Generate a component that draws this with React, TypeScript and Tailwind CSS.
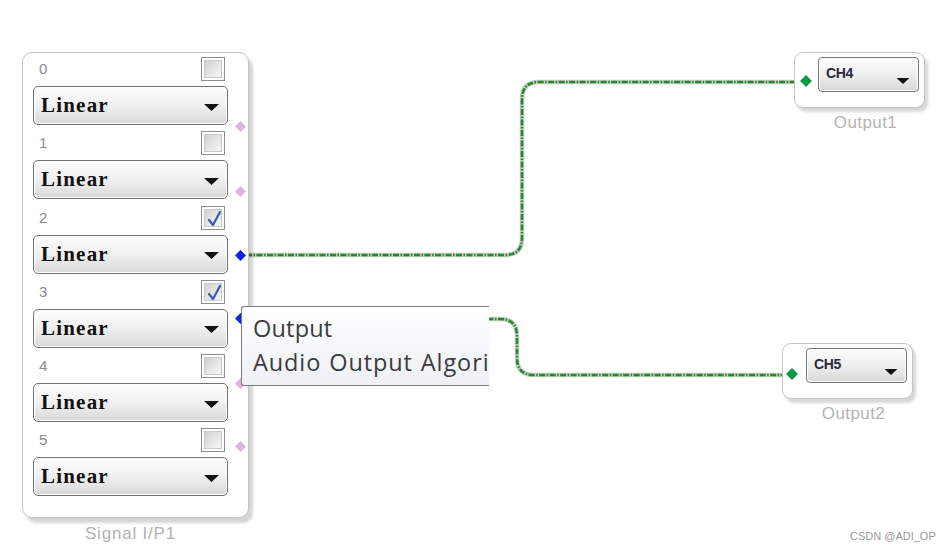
import React from "react";

const rows = [
  { n: "0", checked: false },
  { n: "1", checked: false },
  { n: "2", checked: true },
  { n: "3", checked: true },
  { n: "4", checked: false },
  { n: "5", checked: false },
];

const pins = [
  { y: 126, c: "#d8b8da" },
  { y: 191, c: "#d8b8da" },
  { y: 255, c: "#0a24e8" },
  { y: 318, c: "#0a24e8" },
  { y: 383, c: "#d8b8da" },
  { y: 446, c: "#d8b8da" },
];

function Diamond({ x, y, color, size = 12 }: { x: number; y: number; color: string; size?: number }) {
  return (
    <svg
      className="absolute"
      style={{ left: x - size / 2, top: y - size / 2 }}
      width={size}
      height={size}
      viewBox="0 0 12 12"
    >
      <polygon points="6,0 12,6 6,12 0,6" fill={color} />
    </svg>
  );
}

function Arrow({ w = 15, h = 7 }: { w?: number; h?: number }) {
  return (
    <svg width={w} height={h} viewBox="0 0 15 7" className="shrink-0">
      <polygon points="0,0 15,0 7.5,7" fill="#111" />
    </svg>
  );
}

function Checkbox({ checked }: { checked: boolean }) {
  return (
    <div className="w-[24px] h-[24px] border border-[#8e8e8e] bg-white p-[2px]">
      <div className="w-full h-full border border-[#c9c9c9] bg-linear-to-br from-[#d2d2d2] to-[#f6f6f6] relative">
        {checked && (
          <svg className="absolute left-0 top-0" width="18" height="18" viewBox="0 0 18 18">
            <path d="M4 10 L8 15 L15 2" fill="none" stroke="#3d57b5" strokeWidth="2.2" strokeLinecap="round" strokeLinejoin="round" />
          </svg>
        )}
      </div>
    </div>
  );
}

function LinearSelect() {
  return (
    <div className="h-[39px] w-[195px] rounded-[5px] border-[1.5px] border-[#727272] bg-linear-to-b from-[#fdfdfd] via-[#f0f0f0] to-[#d9d9d9] flex items-center justify-between pl-[7px] pr-[8px] shadow-[inset_0_0_0_1px_#ffffff]">
      <span className="text-[21px] leading-none tracking-[1.2px] text-[#111] font-bold font-['Liberation_Serif','DejaVu_Serif',serif]">
        Linear
      </span>
      <div className="mt-[3px]">
        <Arrow />
      </div>
    </div>
  );
}

function ChSelect({ label }: { label: string }) {
  return (
    <div className="h-[35px] w-[101px] rounded-[4px] border-[1.5px] border-[#767676] bg-linear-to-b from-[#fdfdfd] via-[#efefef] to-[#d8d8d8] flex justify-between pl-[7px] pr-[8px] pt-[8px] shadow-[inset_0_0_0_1px_#ffffff]">
      <span className="text-[14px] leading-none font-bold text-[#2a2a3a] font-['Liberation_Sans',Arial,sans-serif] tracking-[-0.3px]">
        {label}
      </span>
      <div className="mt-[12px]">
        <Arrow w={14} h={6} />
      </div>
    </div>
  );
}

function OutputBlock({ left, top, ch, name }: { left: number; top: number; ch: string; name: string }) {
  return (
    <div className="absolute flex flex-col items-center" style={{ left, top }}>
      <div className="w-[131px] h-[56px] rounded-[9px] border border-[#c6c6c6] bg-white shadow-[3px_4px_3px_rgba(0,0,0,0.16)] flex pl-[23px] pt-[4px]">
        <ChSelect label={ch} />
      </div>
      <div className="mt-[6px] pl-[12px] text-[17px] leading-none tracking-[0.4px] text-[#b4b4b4] font-['Liberation_Sans',Arial,sans-serif]">
        {name}
      </div>
    </div>
  );
}

function Wire({ d }: { d: string }) {
  return (
    <g>
      <path d={d} fill="none" stroke="#c3cfc3" strokeWidth="4.5" strokeLinejoin="round" />
      <path d={d} fill="none" stroke="#2b842f" strokeWidth="2.6" strokeDasharray="6 1.5 1.5 1.5" strokeLinejoin="round" />
    </g>
  );
}

export default function App() {
  return (
    <div className="relative w-[948px] h-[553px] bg-white overflow-hidden font-['Liberation_Sans',Arial,sans-serif]">
      {/* wires */}
      <svg className="absolute left-0 top-0" width="948" height="553">
        <Wire d="M 246 255 H 505 Q 522 255 522 238 V 99 Q 522 82 539 82 H 802" />
        <Wire d="M 246 319 H 500 Q 517 319 517 336 V 358 Q 517 375 534 375 H 788" />
      </svg>

      {/* main block */}
      <div className="absolute left-[22px] top-[52px] flex flex-col items-center">
        <div className="w-[227px] h-[466px] rounded-[10px] border border-[#c4c4c4] bg-white shadow-[4px_5px_3px_rgba(0,0,0,0.17)] pl-[10px] pt-[4px] flex flex-col gap-[6.3px]">
          {rows.map((r) => (
            <div key={r.n} className="flex flex-col w-[195px]">
              <div className="flex justify-between items-start h-[24px] pr-[3px]">
                <span className="pl-[6px] pt-[4px] text-[15px] leading-none text-[#8d8b8b]">{r.n}</span>
                <Checkbox checked={r.checked} />
              </div>
              <div className="mt-[5px]">
                <LinearSelect />
              </div>
            </div>
          ))}
        </div>
        <div className="mt-[7px] pr-[10px] text-[17px] leading-none text-[#b2b2b2] tracking-[0.8px]">Signal I/P1</div>
      </div>

      {/* pins */}
      {pins.map((p, i) => (
        <Diamond key={i} x={240} y={p.y} color={p.c} size={11} />
      ))}

      {/* tooltip */}
      <div className="absolute left-[241px] top-[306px] w-[248px] h-[80px] overflow-hidden rounded-l-[3px] border-y border-l border-[#7a7a7a] bg-linear-to-b from-white to-[#eef0f6] pl-[11px] pt-[4px]">
        <div className="whitespace-nowrap text-[23.5px] leading-[34px] text-[#3c3c3c] font-['Open_Sans','Noto_Sans',sans-serif] tracking-[0.2px]">
          Output
        </div>
        <div className="whitespace-nowrap text-[23.5px] leading-[34px] text-[#3c3c3c] font-['Open_Sans','Noto_Sans',sans-serif] tracking-[0.9px] [word-spacing:1px]">
          Audio Output Algori
        </div>
      </div>

      {/* outputs */}
      <OutputBlock left={794} top={52} ch="CH4" name="Output1" />
      <OutputBlock left={782} top={343} ch="CH5" name="Output2" />
      <Diamond x={806} y={81} color="#0a9a4a" size={12} />
      <Diamond x={792} y={374} color="#0a9a4a" size={12} />

      <div className="absolute left-[850px] top-[531px] text-[11px] leading-none text-[#9a9a9a]">CSDN @ADI_OP</div>
    </div>
  );
}
